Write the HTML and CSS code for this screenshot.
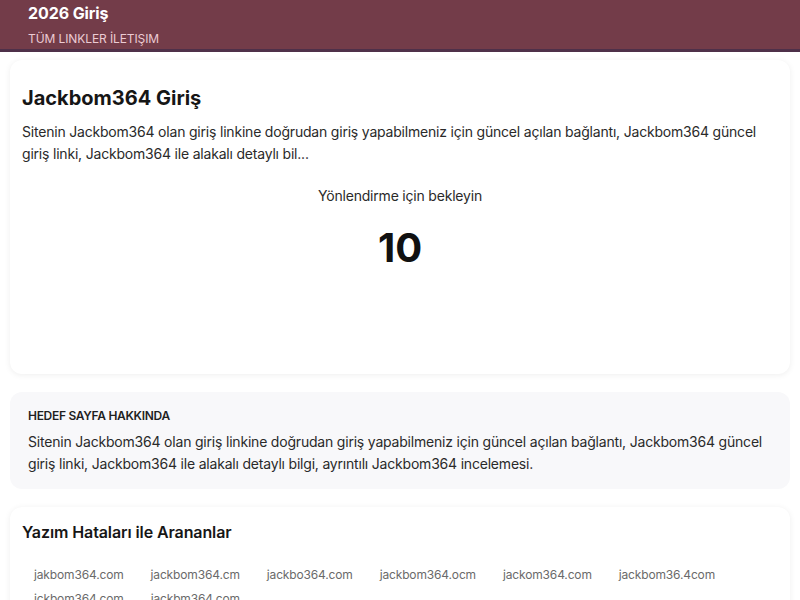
FILE: index.html
```html
<!DOCTYPE html>
<html lang="tr">
<head>
<meta charset="utf-8">
<title>Jackbom364 Giriş</title>
<link rel="stylesheet" href="styles.css">
</head>
<body>
<header class="top">
  <div class="brand">2026 Giriş</div>
  <nav class="nav"><a href="#">TÜM LINKLER</a> <a href="#">İLETIŞIM</a></nav>
</header>
<main class="wrap">
  <section class="card hero">
    <h1 class="title">Jackbom364 Giriş</h1>
    <p class="desc">Sitenin Jackbom364 olan giriş linkine doğrudan giriş yapabilmeniz için güncel açılan bağlantı, Jackbom364 güncel giriş linki, Jackbom364 ile alakalı detaylı bil...</p>
    <div class="wait">Yönlendirme için bekleyin</div>
    <div class="count">10</div>
  </section>
  <section class="about">
    <h2 class="about-title">HEDEF SAYFA HAKKINDA</h2>
    <p class="about-text">Sitenin Jackbom364 olan giriş linkine doğrudan giriş yapabilmeniz için güncel açılan bağlantı, Jackbom364 güncel giriş linki, Jackbom364 ile alakalı detaylı bilgi, ayrıntılı Jackbom364 incelemesi.</p>
  </section>
  <section class="card typos">
    <h2 class="typos-title">Yazım Hataları ile Arananlar</h2>
    <div class="tags">
      <span class="tag">jakbom364.com</span>
      <span class="tag">jackbom364.cm</span>
      <span class="tag">jackbo364.com</span>
      <span class="tag">jackbom364.ocm</span>
      <span class="tag">jackom364.com</span>
      <span class="tag">jackbom36.4com</span>
      <span class="tag">jckbom364.com</span>
      <span class="tag">jackbm364.com</span>
    </div>
  </section>
</main>
</body>
</html>
```
FILE: styles.css
```css
* { box-sizing: border-box; }
html, body { margin: 0; padding: 0; }
body {
  font-family: Inter, "Noto Sans", "DejaVu Sans", sans-serif;
  color: #1f1f1f;
  background: #ffffff;
}
.top {
  background: #733c49;
  border-bottom: 3px solid #4e3049;
  height: 52px;
  padding: 0 28px;
}
.brand {
  color: #ffffff;
  font-weight: 700;
  font-size: 16px;
  line-height: 26px;
  letter-spacing: -0.1px;
}
.nav {
  font-size: 12px;
  line-height: 26px;
  letter-spacing: -0.1px;
}
.nav a {
  color: #eccbd3;
  text-decoration: none;
}
.wrap {
  padding: 8px 10px 0;
  display: flex;
  flex-direction: column;
  gap: 18px;
}
.card {
  background: #ffffff;
  border-radius: 12px;
  box-shadow: 0 1px 6px rgba(0, 0, 0, 0.07);
}
.hero {
  padding: 24px 12px 0;
  height: 314px;
}
.title {
  margin: 0;
  font-size: 20px;
  font-weight: 700;
  line-height: 28px;
  color: #161616;
  letter-spacing: 0;
}
.desc {
  margin: 9px 0 0;
  font-size: 14px;
  line-height: 22px;
  color: #2a2a2a;
  letter-spacing: -0.2px;
}
.wait {
  margin-top: 20px;
  text-align: center;
  font-size: 14px;
  line-height: 22px;
  color: #2a2a2a;
  letter-spacing: -0.2px;
}
.count {
  margin-top: 12px;
  text-align: center;
  font-size: 40px;
  font-weight: 700;
  line-height: 58px;
  color: #111111;
}
.about {
  background: #f8f8fa;
  border-radius: 12px;
  padding: 16px 18px 14px;
}
.about-title {
  margin: 0;
  font-size: 12px;
  font-weight: 600;
  line-height: 16px;
  color: #1f1f1f;
  letter-spacing: -0.3px;
}
.about-text {
  margin: 7px 0 0;
  font-size: 14px;
  line-height: 22px;
  color: #2a2a2a;
  letter-spacing: -0.2px;
}
.typos {
  padding: 14px 12px 12px;
}
.typos-title {
  margin: 0;
  font-size: 16px;
  font-weight: 600;
  line-height: 22px;
  color: #161616;
  letter-spacing: -0.1px;
}
.tags {
  margin-top: 20px;
  display: flex;
  flex-wrap: wrap;
}
.tag {
  font-size: 12px;
  line-height: 24px;
  color: #6a6a6a;
  padding: 0 12px;
  margin-right: 3px;
  letter-spacing: -0.15px;
}
```
